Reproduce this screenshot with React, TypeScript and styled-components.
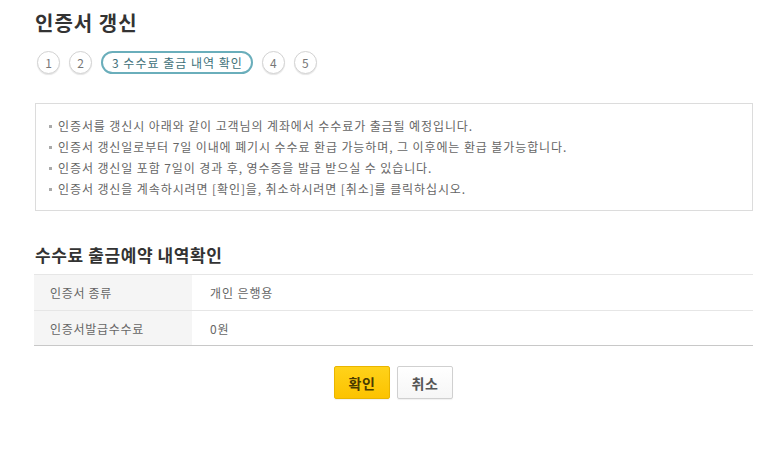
import React from "react";
import styled, { createGlobalStyle } from "styled-components";

const Global = createGlobalStyle`
  html, body { margin: 0; padding: 0; background: #fff; }
  body { font-family: "Noto Sans CJK KR", "Noto Sans", sans-serif; color: #333; }
  * { box-sizing: border-box; }
`;

const Page = styled.div`
  width: 773px;
  padding: 11px 20px 40px 34px;
`;

const Title = styled.h1`
  margin: 0;
  font-size: 20px;
  line-height: 24px;
  font-weight: 700;
  letter-spacing: 1px;
  color: #333;
  padding-left: 1px;
`;

const Steps = styled.ol`
  list-style: none;
  margin: 16px 0 0 3px;
  padding: 0;
  display: flex;
  gap: 9px;
  align-items: center;
`;

const Step = styled.li<{ $active?: boolean }>`
  height: 23px;
  min-width: 23px;
  padding: ${(p) => (p.$active ? "0 8px 0 9px" : "0")};
  border-radius: 12px;
  border: ${(p) => (p.$active ? "2px solid #6aaebb" : "1px solid #d3d3d3")};
  box-shadow: ${(p) => (p.$active ? "none" : "0 1px 1px rgba(0,0,0,0.1)")};
  display: flex;
  align-items: center;
  justify-content: center;
  font-size: 12px;
  letter-spacing: ${(p) => (p.$active ? "1px" : "0")};
  color: ${(p) => (p.$active ? "#3d6f78" : "#777")};
  background: #fff;
`;

const Notice = styled.ul`
  list-style: none;
  margin: 29px 0 0 1px;
  width: 718px;
  padding: 11px 14px 11px 13px;
  border: 1px solid #dcdcdc;
`;

const NoticeItem = styled.li`
  position: relative;
  padding-left: 9px;
  font-size: 12px;
  line-height: 21px;
  color: #666;
  letter-spacing: 0.9px;
  &::before {
    content: "";
    position: absolute;
    left: 0;
    top: 10px;
    width: 3px;
    height: 3px;
    background: #aaa;
  }
`;

const SectionTitle = styled.h2`
  margin: 34px 0 0 1px;
  font-size: 17px;
  line-height: 20px;
  font-weight: 700;
  letter-spacing: 0.6px;
  color: #333;
`;

const Table = styled.div`
  margin-top: 9px;
  width: 719px;
  border-top: 1px solid #e6e6e6;
  border-bottom: 1px solid #c8c8c8;
`;

const Row = styled.div`
  display: grid;
  grid-template-columns: 158px 1fr;
  height: 35px;
  & + & {
    border-top: 1px solid #e6e6e6;
  }
`;

const Label = styled.div`
  background: #f5f5f5;
  padding-left: 16px;
  display: flex;
  align-items: center;
  font-size: 12px;
  letter-spacing: 0.7px;
  color: #666;
`;

const Value = styled.div`
  padding-left: 18px;
  display: flex;
  align-items: center;
  font-size: 12px;
  letter-spacing: 0.9px;
  color: #666;
`;

const Buttons = styled.div`
  width: 719px;
  margin-top: 20px;
  display: flex;
  justify-content: center;
  gap: 7px;
`;

const Button = styled.button<{ $primary?: boolean }>`
  width: 56px;
  height: 33px;
  border-radius: 2px;
  font-family: inherit;
  font-size: 14px;
  font-weight: 700;
  letter-spacing: 0.5px;
  cursor: pointer;
  border: 1px solid ${(p) => (p.$primary ? "#e9b500" : "#d0d0d0")};
  background: ${(p) =>
    p.$primary
      ? "linear-gradient(#ffd21a, #fcc300)"
      : "linear-gradient(#ffffff, #f6f6f6)"};
  color: ${(p) => (p.$primary ? "#4a3b00" : "#555")};
  box-shadow: 0 1px 1px rgba(0, 0, 0, 0.06);
`;

const notices = [
  "인증서를 갱신시 아래와 같이 고객님의 계좌에서 수수료가 출금될 예정입니다.",
  "인증서 갱신일로부터 7일 이내에 폐기시 수수료 환급 가능하며, 그 이후에는 환급 불가능합니다.",
  "인증서 갱신일 포함 7일이 경과 후, 영수증을 발급 받으실 수 있습니다.",
  "인증서 갱신을 계속하시려면 [확인]을, 취소하시려면 [취소]를 클릭하십시오.",
];

export default function App() {
  return (
    <>
      <Global />
      <Page>
        <Title>인증서 갱신</Title>
        <Steps>
          <Step>1</Step>
          <Step>2</Step>
          <Step $active>3 수수료 출금 내역 확인</Step>
          <Step>4</Step>
          <Step>5</Step>
        </Steps>
        <Notice>
          {notices.map((n) => (
            <NoticeItem key={n}>{n}</NoticeItem>
          ))}
        </Notice>
        <SectionTitle>수수료 출금예약 내역확인</SectionTitle>
        <Table>
          <Row>
            <Label>인증서 종류</Label>
            <Value>개인 은행용</Value>
          </Row>
          <Row>
            <Label>인증서발급수수료</Label>
            <Value>0원</Value>
          </Row>
        </Table>
        <Buttons>
          <Button $primary>확인</Button>
          <Button>취소</Button>
        </Buttons>
      </Page>
    </>
  );
}
